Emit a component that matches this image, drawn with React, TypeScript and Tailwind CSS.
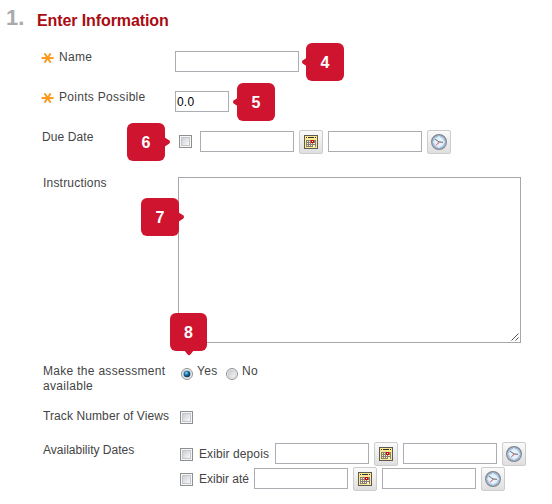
import type { ReactNode } from "react";

type Side = "left" | "right" | "bottom";

const tips: Record<Side, string> = {
  left: "M7 14 L2 17.2 Q0 19 2 20.8 L7 24 Z",
  right: "M37 14 L42 17.2 Q44 19 42 20.8 L37 24 Z",
  bottom: "M14 37 L17.2 41 Q19 43.5 20.8 41 L24 37 Z",
};

function Marker({ n, side, className }: { n: number; side: Side; className: string }) {
  return (
    <div className={`absolute z-10 flex h-[38px] items-center justify-center rounded-[6px] bg-[#cf142f] text-[16px] font-bold leading-none text-white ${className}`}>
      <svg
        className={`absolute top-0 h-[44px] w-[44px] ${side === "left" ? "-left-[5px]" : "left-0"}`}
        viewBox="0 0 44 44"
        fill="#cf142f"
      >
        <path d={tips[side]} />
      </svg>
      <span className="relative pt-[2px]">{n}</span>
    </div>
  );
}

function Field({ className = "w-[94px]", children }: { className?: string; children?: ReactNode }) {
  return (
    <div className={`h-[21px] shrink-0 border border-[#abadb3] bg-white pl-px text-[12px] leading-[20px] tracking-[0.2px] text-black ${className}`}>
      {children}
    </div>
  );
}

function Checkbox() {
  return (
    <div className="h-[13px] w-[13px] shrink-0 border border-[#8e8f8f] bg-[#f6f6f6] p-px">
      <div className="h-full w-full border border-[#c3c7cb] bg-linear-to-br from-[#cbcfd5] to-[#f8f8f8]" />
    </div>
  );
}

function Radio({ checked = false }: { checked?: boolean }) {
  return (
    <svg className="h-[12px] w-[12px] shrink-0" viewBox="0 0 12 12">
      <defs>
        <linearGradient id="radioFace" x1="0" y1="0" x2="1" y2="1">
          <stop offset="0" stopColor="#c3c7cb" />
          <stop offset="1" stopColor="#fafafa" />
        </linearGradient>
        <radialGradient id="radioDot" cx="0.4" cy="0.35" r="0.65">
          <stop offset="0" stopColor="#8be0f7" />
          <stop offset="0.45" stopColor="#1d7aaa" />
          <stop offset="1" stopColor="#0b2c50" />
        </radialGradient>
      </defs>
      <circle cx="6" cy="6" r="5.5" fill="#f4f4f4" stroke="#8e8f8f" />
      <circle cx="6" cy="6" r="4" fill="url(#radioFace)" stroke="#c8cbce" strokeWidth="0.6" />
      {checked && <circle cx="6" cy="6" r="3.3" fill="url(#radioDot)" />}
    </svg>
  );
}

function IconButton({ children }: { children: ReactNode }) {
  return (
    <div className="flex h-[24px] w-[24px] shrink-0 items-center justify-center rounded-[2px] border border-[#cccccc] bg-linear-to-b from-[#fafafa] to-[#dfdfdf]">
      {children}
    </div>
  );
}

function CalendarIcon() {
  return (
    <svg className="h-[14px] w-[14px]" viewBox="0 0 14 14" shapeRendering="crispEdges">
      <rect width="14" height="14" fill="#5c5a55" />
      <rect x="1" y="1" width="12" height="12" fill="#ffe98f" />
      <path d="M2 2h1v1H2zM4 2h6v1H4zM11 2h1v1h-1z" fill="#333" />
      <rect x="2" y="5" width="10" height="7" fill="#858078" />
      <path d="M3 6h1v1H3zM5 6h1v1H5zM3 8h1v1H3zM5 8h1v1H5zM7 8h1v1H7zM9 8h2v1H9zM3 10h1v1H3zM5 10h1v1H5zM7 10h1v1H7zM9 10h2v2H9z" fill="#fff3bd" />
      <rect x="7" y="5" width="3" height="3" fill="#d90000" />
      <rect x="8" y="6" width="1" height="1" fill="#fff" />
    </svg>
  );
}

function ClockIcon() {
  return (
    <svg className="h-[16px] w-[16px] shrink-0" viewBox="0 0 16 16">
      <circle cx="8" cy="8" r="7.4" fill="#a9c5e6" stroke="#85888c" strokeWidth="1.2" />
      <circle cx="8" cy="8" r="5.5" fill="#e5f2fc" stroke="#8fb0d6" strokeWidth="0.7" />
      <path d="M8 2v1M8 13v1M2 8h1M13 8h1" stroke="#fff" strokeWidth="1" />
      <path d="M4.2 5.2 L8 8 L12 8.3" fill="none" stroke="#666" strokeWidth="1" />
      <path d="M8.3 8.2 L5.2 11" stroke="#e84040" strokeWidth="1" />
    </svg>
  );
}

function DateTime() {
  return (
    <div className="flex items-start gap-[5px]">
      <Field className="mt-px w-[94px]" />
      <IconButton><CalendarIcon /></IconButton>
      <Field className="mt-px w-[94px]" />
      <IconButton><ClockIcon /></IconButton>
    </div>
  );
}

function Required() {
  return (
    <svg className="mt-[2px] h-[12px] w-[13px] shrink-0" viewBox="0 0 13 12" stroke="#fb9a1c" strokeWidth="2" strokeLinecap="round">
      <path d="M1.4 6h10.4M4 2l5.2 8M9.2 2L4 10" />
    </svg>
  );
}

export default function App() {
  return (
    <div className="relative h-[504px] w-[552px] overflow-hidden bg-white font-['Liberation_Sans',Arial,sans-serif] text-[12px] leading-[15px] text-[#444]">
      <header className="flex h-[40px] items-start font-bold">
        <span className="w-[37px] pl-[6px] pt-[5px] text-[22px] leading-[25px] text-[#aaaaaa]">1.</span>
        <h1 className="pt-[12px] text-[16px] leading-[18px] tracking-[-0.1px] text-[#a90c12]">Enter Information</h1>
      </header>

      <section className="flex h-[40px] items-start pl-[41px]">
        <div className="flex w-[134px] gap-[5px] pt-[10px]">
          <Required />
          <span className="tracking-[0.3px]">Name</span>
        </div>
        <Field className="mt-[11px] w-[124px]" />
      </section>

      <section className="flex h-[40px] items-start pl-[41px]">
        <div className="flex w-[134px] gap-[5px] pt-[10px]">
          <Required />
          <span className="tracking-[0.3px]">Points Possible</span>
        </div>
        <Field className="mt-[11px] w-[54px]">0.0</Field>
      </section>

      <section className="flex h-[45px] items-start pl-[42px]">
        <span className="w-[137px] pt-[10px] tracking-[0.1px]">Due Date</span>
        <div className="mr-[8px] mt-[15px]"><Checkbox /></div>
        <div className="mt-[10px]"><DateTime /></div>
      </section>

      <section className="flex h-[190px] items-start pl-[43px]">
        <span className="w-[135px] pt-[11px] tracking-[0.2px]">Instructions</span>
        <div className="mt-[12px] flex h-[166px] w-[343px] items-end justify-end border border-[#a5a7ad] bg-white pb-px pr-px">
          <svg className="h-[8px] w-[8px]" viewBox="0 0 8 8" stroke="#555" strokeWidth="1">
            <path d="M0.5 7.5l7-7M4.5 7.5l3-3" />
          </svg>
        </div>
      </section>

      <section className="flex h-[45px] items-start pl-[43px]">
        <span className="w-[138px] pt-[9px] tracking-[0.3px]">Make the assessment<br />available</span>
        <div className="flex items-start pt-[9px]">
          <div className="mr-[4px] mt-[4px]"><Radio checked /></div>
          <span className="w-[29px] tracking-[0.3px]">Yes</span>
          <div className="mr-[4px] mt-[4px]"><Radio /></div>
          <span className="tracking-[0.3px]">No</span>
        </div>
      </section>

      <section className="flex h-[35px] items-start pl-[43px]">
        <span className="w-[137px] pt-[9px] tracking-[0.1px]">Track Number of Views</span>
        <div className="mt-[11px]"><Checkbox /></div>
      </section>

      <section className="flex h-[69px] items-start pl-[43px]">
        <span className="w-[137px] pt-[8px]">Availability Dates</span>
        <div className="flex flex-col gap-px pt-[7px]">
          <div className="flex h-[24px] items-start">
            <div className="mt-[6px]"><Checkbox /></div>
            <span className="w-[82px] pl-[6px] pt-[5px] tracking-[0.1px]">Exibir depois</span>
            <DateTime />
          </div>
          <div className="flex h-[24px] items-start">
            <div className="mt-[6px]"><Checkbox /></div>
            <span className="w-[61px] pl-[6px] pt-[5px]">Exibir até</span>
            <DateTime />
          </div>
        </div>
      </section>

      <Marker n={4} side="left" className="left-[306px] top-[43px] w-[38px]" />
      <Marker n={5} side="left" className="left-[237px] top-[83px] w-[38px]" />
      <Marker n={6} side="right" className="left-[127px] top-[123px] w-[38px]" />
      <Marker n={7} side="right" className="left-[141px] top-[198px] w-[38px]" />
      <Marker n={8} side="bottom" className="left-[170px] top-[313px] w-[37px]" />
    </div>
  );
}
